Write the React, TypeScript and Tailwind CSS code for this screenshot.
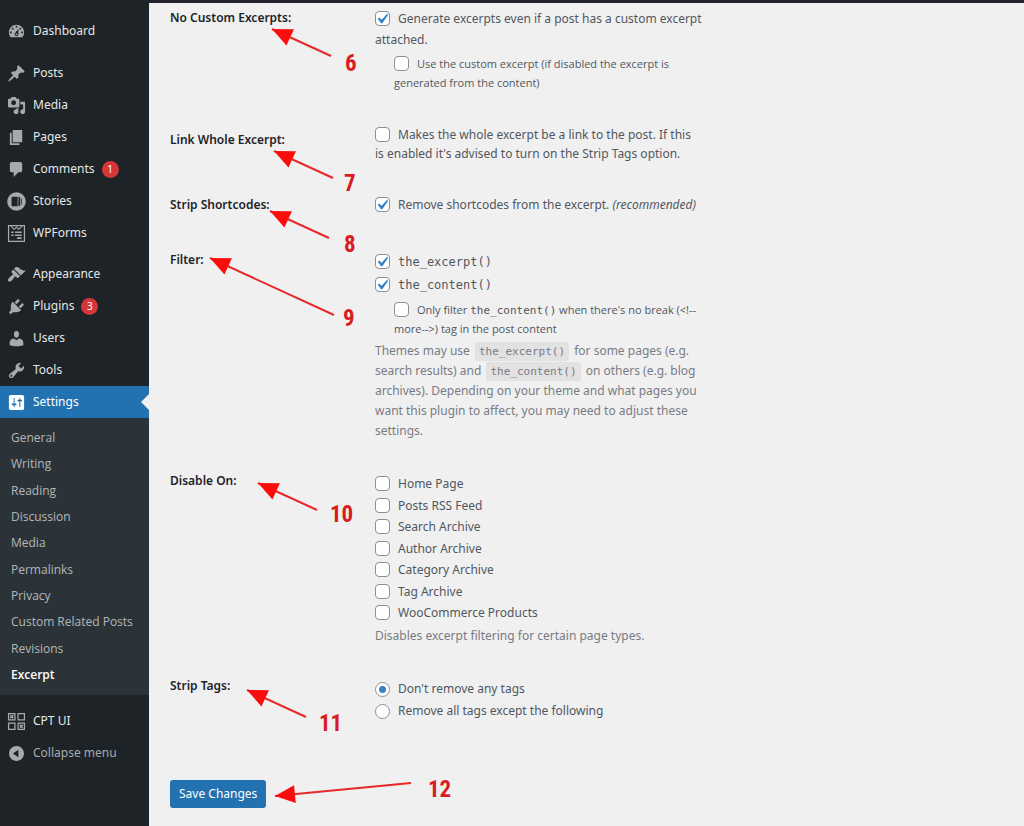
import type { ReactNode } from "react";

const icons = {
  dashboard:
    "M3.76 16h12.48c1.1-1.37 1.76-3.11 1.76-5 0-4.42-3.58-8-8-8s-8 3.58-8 8c0 1.89.66 3.63 1.76 5zM10 4c.55 0 1 .45 1 1s-.45 1-1 1-1-.45-1-1 .45-1 1-1zM6 6c.55 0 1 .45 1 1s-.45 1-1 1-1-.45-1-1 .45-1 1-1zm8 0c.55 0 1 .45 1 1s-.45 1-1 1-1-.45-1-1 .45-1 1-1zm-5.37 5.55L12 7v6c0 1.1-.9 2-2 2s-2-.9-2-2c0-.57.24-1.08.63-1.45zM4 10c.55 0 1 .45 1 1s-.45 1-1 1-1-.45-1-1 .45-1 1-1zm12 0c.55 0 1 .45 1 1s-.45 1-1 1-1-.45-1-1 .45-1 1-1zm-5 3c0-.55-.45-1-1-1s-1 .45-1 1 .45 1 1 1 1-.45 1-1z",
  posts:
    "M10.44 3.02l1.82-1.82 6.36 6.35-1.83 1.82c-1.05-.68-2.48-.57-3.41.36l-.75.75c-.92.93-1.04 2.35-.35 3.41l-1.83 1.82-2.41-2.41-2.8 2.79c-.42.42-3.38 2.71-3.8 2.29s1.86-3.39 2.28-3.81l2.79-2.79L4.1 9.36l1.83-1.82c1.05.69 2.48.57 3.4-.36l.75-.75c.93-.92 1.05-2.35.36-3.41z",
  media:
    "M13 11V4c0-.55-.45-1-1-1h-1.67L9 1H5L3.67 3H2c-.55 0-1 .45-1 1v7c0 .55.45 1 1 1h10c.55 0 1-.45 1-1zM7 4.5c1.38 0 2.5 1.12 2.5 2.5S8.38 9.5 7 9.5 4.5 8.38 4.5 7 5.62 4.5 7 4.5zM14 6h5v10.5c0 1.38-1.12 2.5-2.5 2.5S14 17.88 14 16.5s1.12-2.5 2.5-2.5c.17 0 .34.02.5.05V9h-3V6zm-4 8.05V13h2v3.5c0 1.38-1.12 2.5-2.5 2.5S7 17.88 7 16.5 8.12 14 9.5 14c.17 0 .34.02.5.05z",
  pages: "M6 15V2h10v13H6zm-1 1h8v2H3V5h2v11z",
  comments:
    "M5 2h9c1.1 0 2 .9 2 2v7c0 1.1-.9 2-2 2h-2l-5 5v-5H5c-1.1 0-2-.9-2-2V4c0-1.1.9-2 2-2z",
  stories:
    "M10 .2a9.800 9.800 0 1 1 0 19.600a9.800 9.800 0 0 1 0-19.600zM5.500 5Q4.800 5 4.800 5.700v8.600q0 .7.700.7h5.700V5zM12 5.200v9.600h1.300q.6 0 .6-.6V5.800q0-.6-.6-.6zM14.700 6.500v7l.8-.6V7.100z",
  wpforms:
    "M1 1h18v18H1zM2.300 2.300v15.400h15.400V2.300zM4.500 2l3.200 2.700L10 2.700l2.300 2L15.500 2l.7.900L12.300 6.300L10 4.300L7.700 6.300L3.800 2.900zM4.500 8h2.500v1.500H4.500zM8.500 8h7v1.500h-7zM4.500 11h2.500v1.500H4.500zM8.500 11h7v1.500h-7zM10.500 14h5v1.700h-5z",
  appearance:
    "M14.48 11.06L7.41 3.99l1.5-1.5c.5-.56 2.3-.47 3.51.32 1.21.8 1.43 1.28 2.91 2.1 1.18.64 2.45 1.26 4.45.85zm-.71.71L6.7 4.7 4.93 6.47c-.39.39-.39 1.02 0 1.41l1.06 1.06c.39.39.39 1.03 0 1.42-.6.6-1.43 1.11-2.21 1.69-.35.26-.7.53-1.01.84C1.43 14.23.4 16.08 1.4 17.07c.99 1 2.84-.03 4.18-1.36.31-.31.58-.66.85-1.02.57-.78 1.08-1.61 1.69-2.21.39-.39 1.02-.39 1.41 0l1.06 1.06c.39.39 1.02.39 1.41 0z",
  plugins:
    "M13.11 4.36L9.87 7.6 8 5.73l3.24-3.24c.35-.34 1.05-.2 1.56.32.52.51.66 1.21.31 1.55zm-8 1.77l.91-1.12 9.01 9.01-1.19.84c-.71.71-2.63 1.16-3.82 1.16H6.14L4.9 17.26c-.59.59-1.54.59-2.12 0-.59-.58-.59-1.53 0-2.12l1.24-1.24v-3.88c0-1.13.4-3.19 1.09-3.89zm7.26 3.97l3.24-3.24c.34-.35 1.04-.21 1.55.31.52.51.66 1.21.31 1.55l-3.24 3.25z",
  users:
    "M10 9.25c-2.27 0-2.73-3.44-2.73-3.44C7 4.02 7.82 2 9.97 2c2.16 0 2.98 2.02 2.71 3.81 0 0-.41 3.44-2.68 3.44zm0 2.57L12.72 10c2.39 0 4.52 2.33 4.52 4.53v2.49s-3.65 1.13-7.24 1.13c-3.65 0-7.24-1.13-7.24-1.13v-2.49c0-2.25 1.94-4.48 4.47-4.48z",
  tools:
    "M16.68 9.77c-1.34 1.34-3.3 1.67-4.95.99l-5.41 6.52c-.99.99-2.59.99-3.58 0s-.99-2.59 0-3.57l6.52-5.42c-.68-1.65-.35-3.61.99-4.95 1.28-1.28 3.12-1.62 4.72-1.06l-2.89 2.89 2.82 2.82 2.86-2.87c.53 1.58.18 3.39-1.08 4.65zM3.81 16.21c.4.39 1.04.39 1.43 0 .4-.4.4-1.04 0-1.43-.39-.4-1.03-.4-1.43 0-.39.39-.39 1.03 0 1.43z",
  settings:
    "M18 16V4c0-1.1-.9-2-2-2H4c-1.1 0-2 .9-2 2v12c0 1.1.9 2 2 2h12c1.1 0 2-.9 2-2zM8 11h1c.55 0 1 .45 1 1s-.45 1-1 1H8v1.5c0 .28-.22.5-.5.5s-.5-.22-.5-.5V13H6c-.55 0-1-.45-1-1s.45-1 1-1h1V5.5c0-.28.22-.5.5-.5s.5.22.5.5V11zm5-2h-1c-.55 0-1-.45-1-1s.45-1 1-1h1V5.500c0-.28.22-.5.5-.5s.5.22.5.5V7h1c.55 0 1 .45 1 1s-.45 1-1 1h-1v5.500c0 .28-.22.5-.5.5s-.5-.22-.5-.5V9z",
  cptui:
    "M1 1h8v8H1zM2.300 2.300v5.400h5.400V2.300zM11 1h8v8h-8zM12.300 2.300v5.400h5.400V2.300zM1 11h8v8H1zM2.300 12.300v5.400h5.400v-5.400zM11 11h8v8h-8zM12.300 12.300v5.400h5.400v-5.400zM3 4l1-1 1 1 1-1 1 1-1 1 1 1-1 1-1-1-1 1-1-1 1-1zM13 14l1-1 1 1 1-1 1 1-1 1 1 1-1 1-1-1-1 1-1-1 1-1z",
  collapse:
    "M10 2.16c4.33 0 7.84 3.51 7.84 7.84s-3.51 7.84-7.84 7.84S2.16 14.33 2.16 10 5.71 2.16 10 2.16zm2 11.72V6.12L6.18 9.97z",
};

type IconName = keyof typeof icons;

function Icon({ name }: { name: IconName }) {
  return (
    <svg viewBox="0 0 20 20" className="size-[19px] shrink-0" fill="currentColor" fillRule="evenodd" aria-hidden="true">
      <path d={icons[name]} />
    </svg>
  );
}

function MenuItem({ icon, label, badge }: { icon: IconName; label: string; badge?: string }) {
  return (
    <a href="#" className="flex h-8 items-center gap-[7px] pl-[7px] text-[#a7aaad]">
      <Icon name={icon} />
      <span className="text-[#e6e7e8]">{label}</span>
      {badge && (
        <span className="flex size-[17px] items-center justify-center rounded-full bg-[#d63638] text-[10px] text-white">
          {badge}
        </span>
      )}
    </a>
  );
}

const submenu = [
  "General", "Writing", "Reading", "Discussion", "Media",
  "Permalinks", "Privacy", "Custom Related Posts", "Revisions", "Excerpt",
];

function Sidebar() {
  return (
    <nav aria-label="Main menu" className="w-[149px] shrink-0 bg-[#1d2327] pt-[15px] text-[12px]">
      <MenuItem icon="dashboard" label="Dashboard" />
      <div className="mt-2.5">
        <MenuItem icon="posts" label="Posts" />
        <MenuItem icon="media" label="Media" />
        <MenuItem icon="pages" label="Pages" />
        <MenuItem icon="comments" label="Comments" badge="1" />
        <MenuItem icon="stories" label="Stories" />
        <MenuItem icon="wpforms" label="WPForms" />
      </div>
      <div className="mt-[9px]">
        <MenuItem icon="appearance" label="Appearance" />
        <MenuItem icon="plugins" label="Plugins" badge="3" />
        <MenuItem icon="users" label="Users" />
        <MenuItem icon="tools" label="Tools" />
        <a href="#" className="relative flex h-8 items-center gap-[7px] bg-[#2271b1] pl-[7px] text-white">
          <Icon name="settings" />
          <span>Settings</span>
          <span className="absolute right-0 border-y-8 border-r-8 border-y-transparent border-r-[#f0f0f1]" />
        </a>
        <ul className="grid min-h-[277px] auto-rows-fr bg-[#2c3338] py-[7px] pl-[11px] font-['Open_Sans',sans-serif] text-[12px] text-[#b3b7bb]">
          {submenu.map((item) => (
            <li key={item} className="flex items-center">
              <a href="#" className={item === "Excerpt" ? "font-semibold text-white" : ""}>{item}</a>
            </li>
          ))}
        </ul>
      </div>
      <div className="mt-2.5">
        <MenuItem icon="cptui" label="CPT UI" />
        <button type="button" className="flex h-8 items-center gap-[7px] pl-[7px] text-[#a7aaad]">
          <Icon name="collapse" />
          <span>Collapse menu</span>
        </button>
      </div>
    </nav>
  );
}

function Check({ checked = false, children }: { checked?: boolean; children: ReactNode }) {
  return (
    <label className="block">
      <span className="relative mr-2 inline-block size-[15px] align-[-3px]">
        <input
          type="checkbox"
          defaultChecked={checked}
          className="peer block size-[15px] appearance-none rounded-[4px] border border-[#8c8f94] bg-white"
        />
        <svg viewBox="0 0 20 20" className="pointer-events-none absolute -top-[2px] -left-[3px] hidden size-5 peer-checked:block" fill="#3582c4" aria-hidden="true">
          <path d="M14.83 4.890l1.340.940-5.810 8.380H9.020L5.780 9.670l1.340-1.250 2.570 2.400z" />
        </svg>
      </span>
      {children}
    </label>
  );
}

function Radio({ checked = false, children }: { checked?: boolean; children: ReactNode }) {
  return (
    <label className="flex items-center gap-2">
      <input
        type="radio"
        name="strip-tags"
        defaultChecked={checked}
        className="flex size-[15px] appearance-none items-center justify-center rounded-full border border-[#8c8f94] bg-white checked:before:size-[7px] checked:before:rounded-full checked:before:bg-[#3582c4] checked:before:content-['']"
      />
      {children}
    </label>
  );
}

function Row({ title, className, children }: { title: string; className: string; children: ReactNode }) {
  return (
    <section aria-label={title} className={`grid grid-cols-[205px_minmax(0,332px)] ${className}`}>
      <h2 className="text-[12px] leading-5 font-semibold text-[#1d2327]">{title}</h2>
      <div>{children}</div>
    </section>
  );
}

function Chip({ children }: { children: ReactNode }) {
  return (
    <code className="mx-0.5 rounded-[2px] bg-[#e2e2e3] px-1 py-[3px] font-['DejaVu_Sans_Mono',monospace] text-[11px] leading-none">{children}</code>
  );
}

const pageTypes = [
  "Home Page", "Posts RSS Feed", "Search Archive", "Author Archive",
  "Category Archive", "Tag Archive", "WooCommerce Products",
];

const notes = [
  { n: "6", x: 345, y: 71, from: [331, 56], to: [272, 29] },
  { n: "7", x: 344, y: 191, from: [333, 178], to: [274, 151] },
  { n: "8", x: 344, y: 252, from: [329, 238], to: [270, 211] },
  { n: "9", x: 343, y: 326, from: [334, 315], to: [210, 258] },
  { n: "10", x: 330, y: 522, from: [317, 510], to: [258, 483] },
  { n: "11", x: 319, y: 731, from: [306, 717], to: [247, 690] },
  { n: "12", x: 428, y: 797, from: [411, 783], to: [275, 796] },
];

function Annotations() {
  return (
    <svg className="pointer-events-none absolute top-0 left-0 h-[826px] w-[720px]" aria-hidden="true">
      {notes.map(({ n, x, y, from, to }) => {
        const angle = (Math.atan2(from[1] - to[1], from[0] - to[0]) * 180) / Math.PI;
        return (
          <g key={n}>
            <line x1={from[0]} y1={from[1]} x2={to[0]} y2={to[1]} stroke="#e8282b" strokeWidth="2" />
            <polygon points="0,0 20,-9 20,9" fill="#fb0d0d" transform={`translate(${to[0]} ${to[1]}) rotate(${angle})`} />
            <text x={x} y={y} fill="#d81c1f" className="font-['Liberation_Sans_Narrow','Roboto_Condensed',sans-serif] text-[23px] font-bold">{n}</text>
          </g>
        );
      })}
    </svg>
  );
}

export default function App() {
  return (
    <div className="relative flex min-h-screen bg-[#f0f0f1] font-['Noto_Sans',sans-serif]">
      <Sidebar />
      <main className="min-w-0 flex-1 border-t-[3px] border-[#23222c] pl-[21px] text-[12px] text-[#50575e]">
        <form>
          <Row title="No Custom Excerpts:" className="pt-[5px]">
            <div className="leading-[21px]">
              <Check checked>Generate excerpts even if a post has a custom excerpt attached.</Check>
            </div>
            <div className="mt-1 ml-[19px] max-w-[300px] font-['Open_Sans',sans-serif] text-[11px] leading-[19px]">
              <Check>Use the custom excerpt (if disabled the excerpt is generated from the content)</Check>
            </div>
          </Row>
          <Row title="Link Whole Excerpt:" className="pt-[33px] [&>h2]:pt-[5px]">
            <div className="max-w-[324px] leading-[19px]">
              <Check>Makes the whole excerpt be a link to the post. If this is enabled it's advised to turn on the Strip Tags option.</Check>
            </div>
          </Row>
          <Row title="Strip Shortcodes:" className="pt-8">
            <div className="leading-5">
              <Check checked>Remove shortcodes from the excerpt. <em>(recommended)</em></Check>
            </div>
          </Row>
          <Row title="Filter:" className="pt-[35px]">
            <div className="mt-px font-['DejaVu_Sans_Mono',monospace] text-[12px] leading-[23px]">
              <Check checked>the_excerpt()</Check>
              <Check checked>the_content()</Check>
            </div>
            <div className="mt-[3px] ml-[19px] max-w-[305px] font-['Open_Sans',sans-serif] text-[11px] leading-[19px]">
              <Check>
                Only filter <span className="font-['DejaVu_Sans_Mono',monospace] leading-none">the_content()</span> when there's no break (&lt;!--more--&gt;) tag in the post content
              </Check>
            </div>
            <p className="mt-[3px] leading-5 text-[#787c82]">
              Themes may use <Chip>the_excerpt()</Chip> for some pages (e.g. search results) and <Chip>the_content()</Chip> on others (e.g. blog archives). Depending on your theme and what pages you want this plugin to affect, you may need to adjust these settings.
            </p>
          </Row>
          <Row title="Disable On:" className="pt-[30px]">
            <div className="mt-0.5 grid min-h-[151px] auto-rows-fr leading-[21px]">
              {pageTypes.map((type) => (
                <Check key={type}>{type}</Check>
              ))}
            </div>
            <p className="mt-0.5 leading-5 text-[#787c82]">Disables excerpt filtering for certain page types.</p>
          </Row>
          <Row title="Strip Tags:" className="pt-[30px]">
            <div className="mt-0.5 leading-[22px]">
              <Radio checked>Don't remove any tags</Radio>
              <Radio>Remove all tags except the following</Radio>
            </div>
          </Row>
          <button type="submit" className="mt-[58px] h-7 rounded-[3px] bg-[#2271b1] px-[9px] text-[12px] text-white">
            Save Changes
          </button>
        </form>
      </main>
      <Annotations />
    </div>
  );
}
